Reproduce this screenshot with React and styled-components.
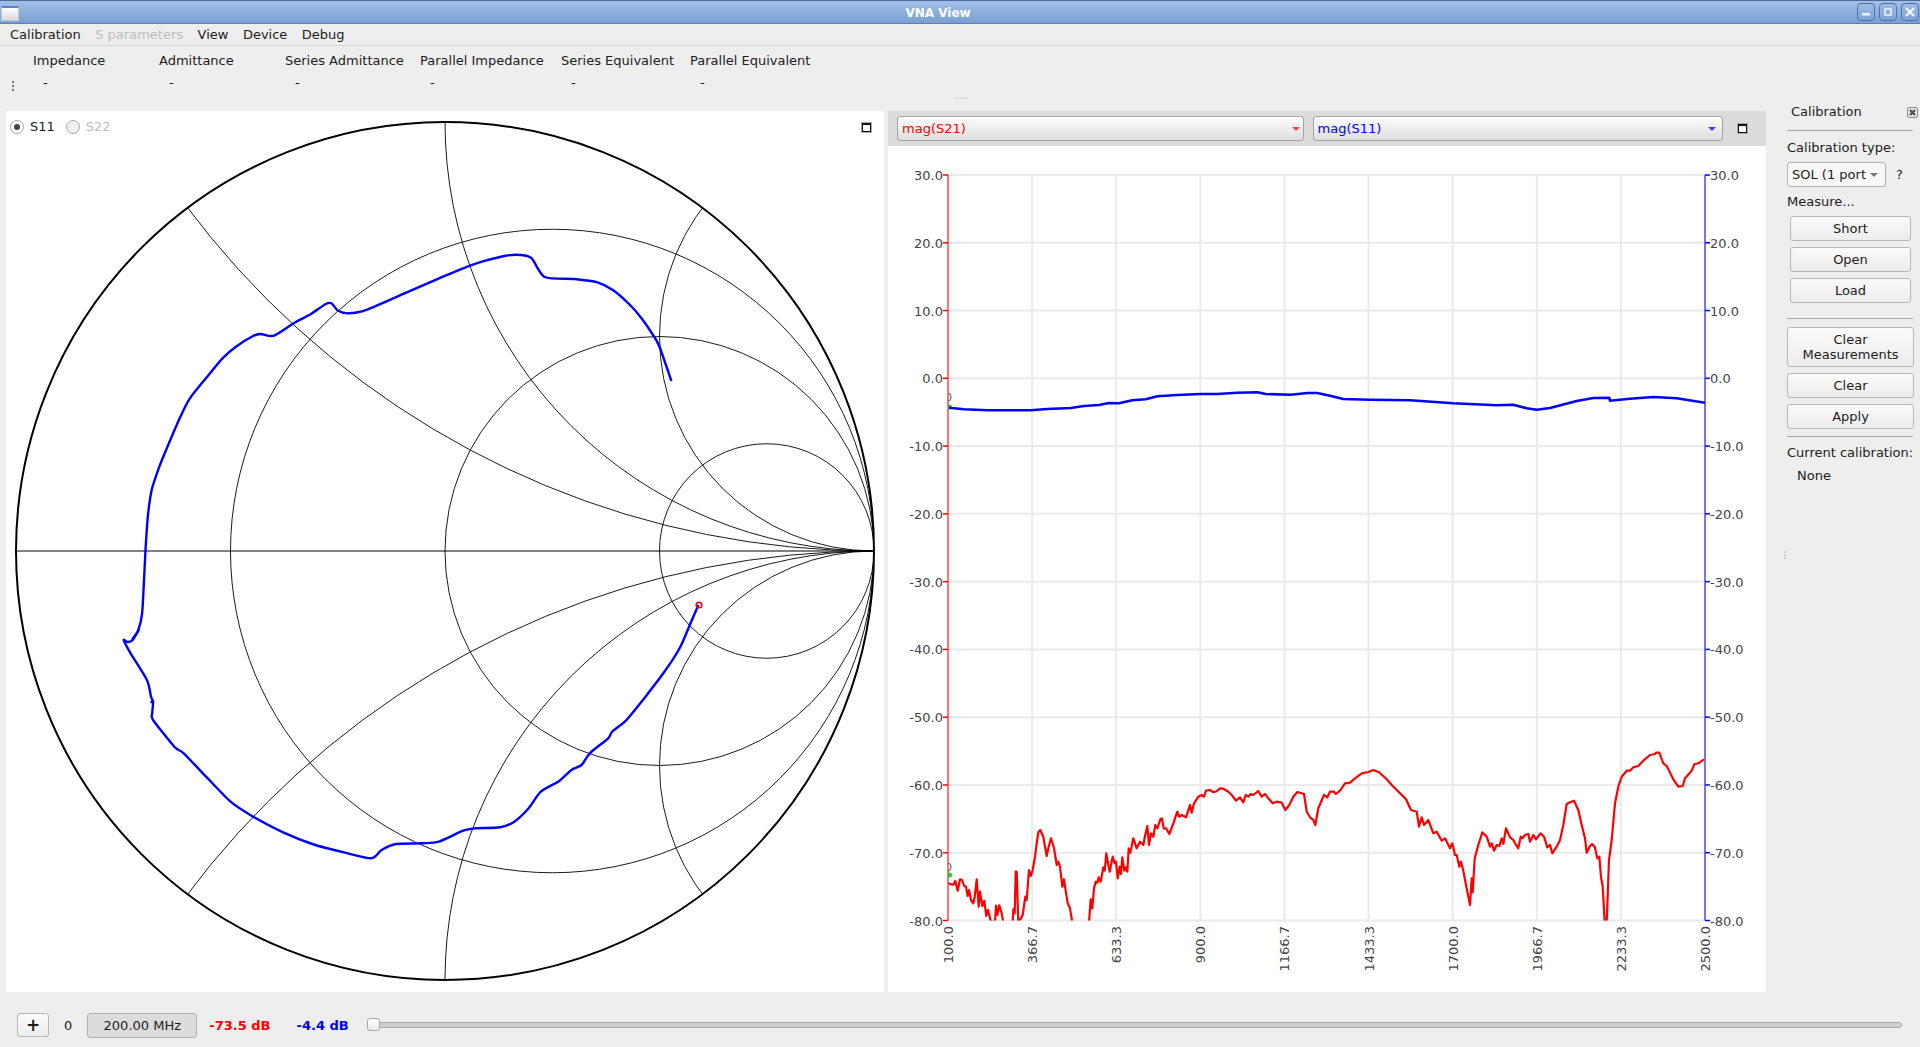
import React from "react";
import styled, { createGlobalStyle } from "styled-components";

const GlobalStyle = createGlobalStyle`
  html, body {
    margin: 0;
    padding: 0;
    background: #eeeeee;
    font-family: "DejaVu Sans", "Liberation Sans", sans-serif;
    font-size: 13px;
    color: #1c1c1c;
  }
`;

const Window = styled.div`
  width: 1920px;
  height: 1047px;
  overflow: hidden;
  display: flex;
  flex-direction: column;
`;

const TitleBar = styled.div`
  height: 24px;
  box-sizing: border-box;
  flex: none;
  display: flex;
  align-items: center;
  background: linear-gradient(#a0c0e8, #7a9fd2);
  border-top: 1px solid #4a6a9c;
  border-bottom: 1px solid #5e80b4;
`;

const AppIcon = styled.div`
  width: 18px;
  height: 15px;
  margin-left: 1px;
  margin-top: 3px;
  box-sizing: border-box;
  border: 1px solid #c4ccd8;
  border-top: 2px solid #5d82bd;
  background: linear-gradient(#ffffff, #d8d8d8);
`;

const WindowTitle = styled.div`
  flex: 1;
  padding-top: 1px;
  text-align: center;
  color: #ffffff;
  font-weight: bold;
  font-size: 12px;
`;

const WindowButtons = styled.div`
  display: flex;
  gap: 4px;
  margin-right: 1px;
`;

const WindowButton = styled.div`
  width: 18px;
  height: 18px;
  box-sizing: border-box;
  display: flex;
  align-items: center;
  justify-content: center;
  border: 1px solid #4f71a6;
  border-radius: 4px;
  background: linear-gradient(#9dbde6, #7fa2d4);
`;

const MenuBar = styled.div`
  height: 22px;
  box-sizing: border-box;
  flex: none;
  display: flex;
  align-items: center;
  gap: 14.5px;
  padding: 0 0 1px 10px;
  border-bottom: 1px solid #d6d6d6;
`;

const MenuItem = styled.span`
  color: ${(p) => (p.$disabled ? "#bdbdbd" : "#1c1c1c")};
`;

const Body = styled.div`
  flex: 1;
  display: flex;
  min-height: 0;
`;

const MainColumn = styled.div`
  width: 1766px;
  display: flex;
  flex-direction: column;
`;

const ValuesArea = styled.div`
  height: 65px;
  flex: none;
  display: flex;
  flex-direction: column;
`;

const ValuesRow = styled.div`
  display: flex;
  height: 51px;
`;

const VerticalGrip = styled.div`
  display: flex;
  flex-direction: column;
  gap: 2px;
  margin: 35px 0 0 12px;
  width: 3px;
`;

const GripDot = styled.i`
  display: block;
  width: 2px;
  height: 2px;
  background: ${(p) => p.$color || "#777777"};
`;

const ValuesGrid = styled.div`
  display: grid;
  grid-template-columns: 126px 126px 135px 141px 129px 150px;
  grid-template-rows: 16px 16px;
  row-gap: 6px;
  margin: 7px 0 0 18px;
`;

const ValueLabel = styled.div`
  line-height: 16px;
  white-space: nowrap;
`;

const ValueDash = styled.div`
  line-height: 16px;
  padding-left: 10px;
`;

const HandleRow = styled.div`
  display: flex;
  justify-content: center;
  gap: 1px;
  height: 14px;
  padding-left: 156px;
`;

const PlotsRow = styled.div`
  flex: 1;
  display: flex;
  gap: 4px;
  padding-left: 6px;
  min-height: 0;
`;

const SmithPanel = styled.div`
  position: relative;
  width: 878px;
  background: #ffffff;
`;

const PlotSvg = styled.svg`
  display: block;
  width: 100%;
  height: ${(p) => p.$h}px;
`;

const PortChoice = styled.div`
  position: absolute;
  left: 4px;
  top: 8px;
  display: flex;
  align-items: center;
`;

const Radio = styled.span`
  width: 14px;
  height: 14px;
  box-sizing: border-box;
  border-radius: 50%;
  border: 1px solid #ababab;
  background: ${(p) => (p.$disabled ? "#eeeeee" : "#ffffff")};
  display: flex;
  align-items: center;
  justify-content: center;
  &::after {
    content: "";
    display: ${(p) => (p.$checked ? "block" : "none")};
    width: 6px;
    height: 6px;
    border-radius: 50%;
    background: #444444;
  }
`;

const RadioText = styled.span`
  margin-left: 6px;
  margin-right: 11px;
  color: ${(p) => (p.$disabled ? "#bdbdbd" : "#1c1c1c")};
`;

const MaxButton = styled.div`
  width: 9px;
  height: 9px;
  box-sizing: border-box;
  border: 1px solid #111111;
  border-top-width: 2px;
  outline: 1px solid #a8a8a8;
  background: #ffffff;
`;

const SmithMax = styled.div`
  position: absolute;
  left: 856px;
  top: 12px;
`;

const ChartPanel = styled.div`
  width: 878px;
  display: flex;
  flex-direction: column;
  background: #ffffff;
`;

const ChartHeader = styled.div`
  height: 35px;
  box-sizing: border-box;
  flex: none;
  display: flex;
  align-items: center;
  padding: 0 19px 0 9px;
  background: #dcdcdc;
`;

const TraceCombo = styled.div`
  width: ${(p) => p.$w}px;
  height: 25px;
  box-sizing: border-box;
  margin-right: ${(p) => p.$mr}px;
  display: flex;
  align-items: center;
  padding: 0 ${(p) => p.$pr}px 0 4px;
  border: 1px solid #a4a4a4;
  border-radius: 3px;
  background: linear-gradient(#fdfdfd, #dedede);
  color: ${(p) => p.$color};
`;

const ComboText = styled.span`
  flex: 1;
`;

const ComboArrow = styled.i`
  width: 0;
  height: 0;
  border-left: 4px solid transparent;
  border-right: 4px solid transparent;
  border-top: 4px solid ${(p) => p.$color};
`;

const Dock = styled.div`
  flex: 1;
  display: flex;
  min-width: 0;
`;

const DockSplitter = styled.div`
  width: 21px;
  box-sizing: border-box;
  display: flex;
  flex-direction: column;
  align-items: flex-end;
  gap: 1px;
  padding: 505px 1px 0 0;
`;

const DockBody = styled.div`
  width: 127px;
  padding-top: 58px;
`;

const DockHeader = styled.div`
  display: flex;
  align-items: center;
  justify-content: space-between;
  line-height: 16px;
  padding-left: 4px;
  margin-right: -4px;
`;

const DockRule = styled.div`
  height: 1px;
  width: 126px;
  margin-top: ${(p) => p.$mt}px;
  background: #a8a8a8;
`;

const DockText = styled.div`
  line-height: 16px;
  margin-top: ${(p) => p.$mt}px;
  padding-left: ${(p) => p.$pl || 0}px;
  white-space: nowrap;
`;

const ComboRow = styled.div`
  display: flex;
  align-items: center;
  margin-top: 6px;
`;

const TypeCombo = styled.div`
  width: 99px;
  height: 25px;
  box-sizing: border-box;
  display: flex;
  align-items: center;
  padding: 0 7px 0 4px;
  border: 1px solid #b0b0b0;
  border-radius: 3px;
  background: #f8f8f8;
  white-space: nowrap;
`;

const HelpMark = styled.span`
  margin-left: 10px;
`;

const PushButton = styled.div`
  margin-top: ${(p) => p.$mt}px;
  margin-left: ${(p) => p.$ml || 0}px;
  width: ${(p) => p.$w}px;
  height: ${(p) => p.$h || 25}px;
  box-sizing: border-box;
  display: flex;
  align-items: center;
  justify-content: center;
  text-align: center;
  line-height: 15px;
  border: 1px solid #b6b6b6;
  border-radius: 3px;
  background: linear-gradient(#fbfbfb, #ececec);
`;

const BottomBar = styled.div`
  height: 55px;
  box-sizing: border-box;
  flex: none;
  display: flex;
  align-items: center;
  padding: 11px 18px 0 17px;
`;

const PlusButton = styled.div`
  width: 32px;
  height: 24px;
  box-sizing: border-box;
  display: flex;
  align-items: center;
  justify-content: center;
  font-size: 17px;
  font-weight: bold;
  border: 1px solid #b6b6b6;
  border-radius: 3px;
  background: linear-gradient(#fbfbfb, #ececec);
`;

const MarkerIndex = styled.span`
  margin: 0 15px 0 15px;
`;

const FreqButton = styled.div`
  width: 110px;
  height: 25px;
  box-sizing: border-box;
  display: flex;
  align-items: center;
  justify-content: center;
  border: 1px solid #b0b0b0;
  border-radius: 3px;
  background: #dcdcdc;
`;

const Reading = styled.span`
  font-weight: bold;
  color: ${(p) => p.$color};
  margin-left: ${(p) => p.$ml}px;
`;

const Slider = styled.div`
  position: relative;
  flex: 1;
  margin-left: 18px;
  height: 6px;
  box-sizing: border-box;
  border: 1px solid #a8a8a8;
  border-radius: 3px;
  background: #d0d0d0;
`;

const SliderHandle = styled.div`
  position: absolute;
  left: -1px;
  top: -5px;
  width: 13px;
  height: 13px;
  box-sizing: border-box;
  border: 1px solid #a8a8a8;
  border-radius: 3px;
  background: linear-gradient(#ffffff, #ececec);
`;

const toPath = (pts) => "M" + pts.map((p) => p[0].toFixed(1) + " " + p[1].toFixed(1)).join("L");

// catmull-rom through the traced points, the smith trace has no noise so it should not look faceted
const toSmoothPath = (pts) => {
  let d = `M${pts[0][0].toFixed(1)} ${pts[0][1].toFixed(1)}`;
  for (let i = 0; i < pts.length - 1; i++) {
    const p0 = pts[i - 1] || pts[i];
    const p1 = pts[i];
    const p2 = pts[i + 1];
    const p3 = pts[i + 2] || p2;
    const c1 = [p1[0] + (p2[0] - p0[0]) / 8, p1[1] + (p2[1] - p0[1]) / 8];
    const c2 = [p2[0] - (p3[0] - p1[0]) / 8, p2[1] - (p3[1] - p1[1]) / 8];
    d += `C${c1[0].toFixed(1)} ${c1[1].toFixed(1)} ${c2[0].toFixed(1)} ${c2[1].toFixed(1)} ${p2[0].toFixed(1)} ${p2[1].toFixed(1)}`;
  }
  return d;
};

// traced from the trace, upper half then lower half of the smith plot
const smithUpper = [
  [1493,423],[1462,320],[1445,285],[1415,235],[1385,195],[1340,150],[1300,127],[1240,117],[1162,111],[1128,55],
  [1100,45],[1060,47],[1000,64],[960,80],[880,118],[800,158],[700,208],[650,220],[622,212],[605,190],[590,192],
  [550,223],[510,247],[455,287],[420,282],[400,288],[355,320],[320,355],[280,410],[235,475],[210,530],[180,610],
  [155,680],[135,750],[125,830],[119,930],[115,1020],[110,1120],[100,1170],[85,1197],
].map(([x, y]) => [100 + x / 2.613, 240 + y / 3]);

const smithLower = [
  [95,120],[80,150],[68,156],[58,150],[75,190],[115,270],[125,320],[130,335],[126,336],[130,338],[128,370],[130,390],
  [182,470],[205,490],[260,560],[320,635],[375,680],[450,728],[520,762],[600,788],[665,805],[690,780],[725,762],
  [790,760],[830,755],[890,722],[920,715],[980,712],[1015,695],[1050,655],[1080,605],[1125,573],[1155,540],[1180,525],
  [1200,490],[1245,445],[1255,425],[1290,390],[1330,330],[1380,250],[1420,175],[1445,105],[1466,45],
].map(([x, y]) => [100 + x / 2.45, 590 + y / 3]);

const chartBlue = [
  ...[[15,98],[60,103],[130,106],[200,106],[260,106],[310,102],[380,99],[420,93],[465,90],[495,84],[525,85],[565,76],
    [605,73],[640,64],[700,60],[770,57],[820,57],[880,53],[940,52],[965,57],[1040,59],[1090,54],[1120,54]]
    .map(([x, y]) => [944 + x / 3, 375 + y / 3]),
  ...[[0,62],[40,72],[120,74],[240,76],[370,85],[500,91],[550,89],[590,100],[620,104],[660,99],[740,78],[790,69],
    [838,68],[840,77],[900,71],[970,66],[1040,70],[1125,83]]
    .map(([x, y]) => [1330 + x / 3, 375 + y / 3]),
];

const chartRed = [
  ...[[205,430],[213,433],[220,434],[226,423],[233,452],[240,418],[246,420],[252,437],[258,440],[263,468],[267,450],
    [273,480],[280,490],[284,470],[290,418],[296,500],[300,455],[307,498],[313,482],[319,528],[324,510],[332,542],
    [345,548],[348,497],[352,525],[358,496],[365,520],[370,548],[398,548],[400,508],[404,520],[407,395],[410,395],
    [415,550],[428,525],[436,470],[440,480],[447,390],[452,408],[458,390],[465,350],[470,310],[475,277],[481,270],
    [490,290],[495,320],[500,348],[505,325],[513,295],[522,325],[530,375],[535,365],[540,380],[547,440],[552,418],
    [556,445],[563,490],[570,505],[577,548],[627,548],[632,478],[637,505],[642,445],[647,425],[652,428],[656,412],
    [662,425],[670,382],[674,392],[679,340],[684,370],[689,395],[698,350],[704,370],[708,365],[713,415],[719,380],
    [723,402],[727,352],[733,392],[737,382],[742,395],[746,325],[751,338],[760,295],[770,325],[780,305],[790,315],
    [795,288],[802,258],[807,315],[813,280],[820,290],[826,255],[832,265],[842,236],[846,236],[851,265],[858,265],
    [868,282],[880,250],[892,215],[897,230],[905,225],[918,232],[930,195],[935,218],[942,190],[955,170],[965,165],
    [972,170],[978,152],[990,150],[1000,157],[1010,154],[1020,145],[1030,146],[1045,155],[1055,165],[1068,182],
    [1080,172],[1090,187],[1097,165],[1105,170],[1112,162],[1120,165],[1135,153],[1145,170],[1155,162],[1165,175],
    [1178,190],[1190,185],[1205,188],[1216,210],[1228,195],[1240,170],[1252,156],[1272,162],[1280,215],[1290,232],
    [1300,240],[1306,255],[1315,205],[1332,165],[1342,172],[1350,155],[1362,155],[1368,162],[1380,152],[1395,130],
    [1410,128],[1425,115],[1445,100],[1465,96],[1480,90],[1497,97],[1520,118],[1535,135],[1560,160]]
    .map(([x, y]) => [880 + x / 3, 740 + y / 3]),
  ...[[318,178],[333,210],[350,215],[357,260],[365,232],[372,255],[385,240],[400,280],[410,275],[425,302],[435,295],
    [450,325],[457,310],[465,345],[470,345],[478,380],[483,365],[490,392],[498,435],[510,495],[515,415],[518,457],
    [524,355],[535,315],[547,277],[560,290],[570,320],[575,310],[582,332],[590,315],[598,318],[605,295],[610,312],
    [618,265],[630,292],[640,300],[645,310],[655,325],[662,290],[667,295],[675,285],[685,282],[690,305],[700,285],
    [708,298],[722,280],[732,290],[742,322],[750,315],[757,340],[770,320],[780,300],[790,255],[800,192],[810,187],
    [822,182],[835,210],[845,255],[855,295],[860,338],[870,318],[876,312],[884,320],[892,355],[898,350],[903,410],
    [908,440],[914,548],[920,548],[927,360],[935,300],[945,190],[955,140],[965,110],[980,92],[990,92],[1000,82],
    [1015,78],[1030,62],[1050,45],[1065,42],[1068,38],[1078,38],[1090,70],[1100,78],[1120,118],[1135,140],[1148,138],
    [1155,115],[1175,92],[1183,73],[1195,70],[1212,58]]
    .map(([x, y]) => [1300 + x / 3, 740 + y / 3]),
];

const SmithChart = () => {
  const cx = 445;
  const cy = 551;
  const r = 429;
  const right = cx + r;
  return (
    <PlotSvg $h={881} viewBox="6 111 878 881">
      <defs>
        <clipPath id="smith-clip">
          <circle cx={cx} cy={cy} r={r} />
        </clipPath>
      </defs>
      <g fill="none" stroke="#000000" strokeWidth="0.9" clipPath="url(#smith-clip)">
        {[r / 4, r / 2, (r * 3) / 4].map((c) => (
          <circle key={c} cx={right - c} cy={cy} r={c} />
        ))}
        {[r * 2, r, r / 2].map((c) => (
          <React.Fragment key={c}>
            <circle cx={right} cy={cy - c} r={c} />
            <circle cx={right} cy={cy + c} r={c} />
          </React.Fragment>
        ))}
        <line x1={cx - r} y1={cy} x2={right} y2={cy} strokeWidth="1" />
      </g>
      <circle cx={cx} cy={cy} r={r} fill="none" stroke="#000000" strokeWidth="2" />
      <path
        d={toSmoothPath([...smithUpper, ...smithLower])}
        fill="none"
        stroke="#0000ff"
        strokeWidth="2.4"
        strokeLinejoin="round"
      />
      <circle cx="699" cy="605" r="2.8" fill="none" stroke="#ff0000" strokeWidth="1.6" />
    </PlotSvg>
  );
};

const yTicks = [30, 20, 10, 0, -10, -20, -30, -40, -50, -60, -70, -80];
const xTicks = ["100.0", "366.7", "633.3", "900.0", "1166.7", "1433.3", "1700.0", "1966.7", "2233.3", "2500.0"];
const plot = { left: 948, right: 1705, top: 175, bottom: 920.5 };
const yOf = (v) => plot.top + ((30 - v) * (plot.bottom - plot.top)) / 110;
const xOf = (i) => plot.left + (i * (plot.right - plot.left)) / 9;

const MagnitudeChart = () => (
  <PlotSvg $h={846} viewBox="888 146 878 846">
    <defs>
      <clipPath id="plot-clip">
        <rect x={plot.left} y={plot.top} width={plot.right - plot.left} height={plot.bottom - plot.top} />
      </clipPath>
    </defs>
    <g stroke="#eaeaea" strokeWidth="2">
      {yTicks.map((v) => (
        <line key={v} x1={plot.left} x2={plot.right} y1={yOf(v)} y2={yOf(v)} />
      ))}
      {xTicks.map((t, i) => (
        <line key={t} x1={xOf(i)} x2={xOf(i)} y1={plot.top} y2={plot.bottom} />
      ))}
    </g>
    <line x1={plot.left} x2={plot.left} y1={plot.top} y2={plot.bottom} stroke="#ff7474" strokeWidth="2" />
    <line x1={plot.right} x2={plot.right} y1={plot.top} y2={plot.bottom} stroke="#7474ff" strokeWidth="2" />
    {yTicks.map((v) => (
      <g key={v}>
        <line x1={plot.left - 5} x2={plot.left} y1={yOf(v)} y2={yOf(v)} stroke="#ff0000" strokeWidth="1.5" />
        <line x1={plot.right} x2={plot.right + 5} y1={yOf(v)} y2={yOf(v)} stroke="#0000ff" strokeWidth="1.5" />
        <text x={plot.left - 5} y={yOf(v) + 5} textAnchor="end" fontSize="13" fill="#444444" fontFamily="DejaVu Sans">
          {v.toFixed(1)}
        </text>
        <text x={plot.right + 5} y={yOf(v) + 5} fontSize="13" fill="#444444" fontFamily="DejaVu Sans">
          {v.toFixed(1)}
        </text>
      </g>
    ))}
    {xTicks.map((t, i) => (
      <text
        key={t}
        x={xOf(i) + 5}
        y="926"
        textAnchor="end"
        fontSize="13"
        fill="#444444"
        fontFamily="DejaVu Sans"
        transform={`rotate(-90 ${xOf(i) + 5} 926)`}
      >
        {t}
      </text>
    ))}
    <g clipPath="url(#plot-clip)">
      <text x="945" y="871" fontSize="11" fill="#555555" fontFamily="DejaVu Sans">0</text>
      <text x="945" y="401" fontSize="11" fill="#555555" fontFamily="DejaVu Sans">0</text>
      <circle cx="949.5" cy="875" r="2.5" fill="#22cc22" />
      <circle cx="949.5" cy="407" r="2.5" fill="#22cc22" />
      <path d={toPath(chartRed)} fill="none" stroke="#ff0000" strokeWidth="2.2" strokeLinejoin="round" />
      <path d={toPath(chartBlue)} fill="none" stroke="#0000ff" strokeWidth="2.6" strokeLinejoin="round" />
    </g>
  </PlotSvg>
);

const valueColumns = [
  "Impedance",
  "Admittance",
  "Series Admittance",
  "Parallel Impedance",
  "Series Equivalent",
  "Parallel Equivalent",
];

const App = () => (
  <Window>
    <GlobalStyle />
    <TitleBar>
      <AppIcon />
      <WindowTitle>VNA View</WindowTitle>
      <WindowButtons>
        <WindowButton>
          <svg width="10" height="10" viewBox="0 0 10 10">
            <rect x="1" y="6" width="8" height="2.5" fill="#eef4fc" />
          </svg>
        </WindowButton>
        <WindowButton>
          <svg width="10" height="10" viewBox="0 0 10 10">
            <rect x="2" y="2" width="6" height="6" fill="none" stroke="#eef4fc" strokeWidth="1.5" />
          </svg>
        </WindowButton>
        <WindowButton>
          <svg width="12" height="12" viewBox="0 0 12 12">
            <path d="M2 2L10 10M10 2L2 10" stroke="#f4f8fe" strokeWidth="2.2" />
          </svg>
        </WindowButton>
      </WindowButtons>
    </TitleBar>
    <MenuBar>
      <MenuItem>Calibration</MenuItem>
      <MenuItem $disabled>S parameters</MenuItem>
      <MenuItem>View</MenuItem>
      <MenuItem>Device</MenuItem>
      <MenuItem>Debug</MenuItem>
    </MenuBar>
    <Body>
      <MainColumn>
        <ValuesArea>
          <ValuesRow>
            <VerticalGrip>
              <GripDot />
              <GripDot />
              <GripDot />
            </VerticalGrip>
            <ValuesGrid>
              {valueColumns.map((name) => (
                <ValueLabel key={name}>{name}</ValueLabel>
              ))}
              {valueColumns.map((name) => (
                <ValueDash key={name}>-</ValueDash>
              ))}
            </ValuesGrid>
          </ValuesRow>
          <HandleRow>
            {[0, 1, 2, 3, 4].map((i) => (
              <GripDot key={i} $color="#d8d8d8" />
            ))}
          </HandleRow>
        </ValuesArea>
        <PlotsRow>
          <SmithPanel>
            <SmithChart />
            <PortChoice>
              <Radio $checked />
              <RadioText>S11</RadioText>
              <Radio $disabled />
              <RadioText $disabled>S22</RadioText>
            </PortChoice>
            <SmithMax>
              <MaxButton />
            </SmithMax>
          </SmithPanel>
          <ChartPanel>
            <ChartHeader>
              <TraceCombo $w={407} $mr={9} $pr={3} $color="#ff0000">
                <ComboText>mag(S21)</ComboText>
                <ComboArrow $color="#ff4040" />
              </TraceCombo>
              <TraceCombo $w={411} $mr={15} $pr={6} $color="#0000ff">
                <ComboText>mag(S11)</ComboText>
                <ComboArrow $color="#4040ff" />
              </TraceCombo>
              <MaxButton />
            </ChartHeader>
            <MagnitudeChart />
          </ChartPanel>
        </PlotsRow>
      </MainColumn>
      <Dock>
        <DockSplitter>
          <GripDot $color="#d0d0d0" />
          <GripDot $color="#d0d0d0" />
          <GripDot $color="#d0d0d0" />
        </DockSplitter>
        <DockBody>
          <DockHeader>
            Calibration
            <svg width="11" height="11" viewBox="0 0 11 11">
              <rect x="0.5" y="0.5" width="10" height="10" rx="1.5" fill="#e4e4e4" stroke="#8a8a8a" />
              <path d="M3 3L8 8M8 3L3 8" stroke="#4a4a4a" strokeWidth="2" />
            </svg>
          </DockHeader>
          <DockRule $mt={10} />
          <DockText $mt={9}>Calibration type:</DockText>
          <ComboRow>
            <TypeCombo>
              <ComboText>SOL (1 port</ComboText>
              <ComboArrow $color="#777777" />
            </TypeCombo>
            <HelpMark>?</HelpMark>
          </ComboRow>
          <DockText $mt={7}>Measure...</DockText>
          <PushButton $mt={6} $ml={3} $w={121}>Short</PushButton>
          <PushButton $mt={6} $ml={3} $w={121}>Open</PushButton>
          <PushButton $mt={6} $ml={3} $w={121}>Load</PushButton>
          <DockRule $mt={15} />
          <PushButton $mt={8} $w={127} $h={40}>Clear<br />Measurements</PushButton>
          <PushButton $mt={6} $w={127}>Clear</PushButton>
          <PushButton $mt={6} $w={127}>Apply</PushButton>
          <DockRule $mt={7} />
          <DockText $mt={8}>Current calibration:</DockText>
          <DockText $mt={7} $pl={10}>None</DockText>
        </DockBody>
      </Dock>
    </Body>
    <BottomBar>
      <PlusButton>+</PlusButton>
      <MarkerIndex>0</MarkerIndex>
      <FreqButton>200.00 MHz</FreqButton>
      <Reading $color="#ff0000" $ml={12}>-73.5 dB</Reading>
      <Reading $color="#0000ff" $ml={26}>-4.4 dB</Reading>
      <Slider>
        <SliderHandle />
      </Slider>
    </BottomBar>
  </Window>
);

export default App;
